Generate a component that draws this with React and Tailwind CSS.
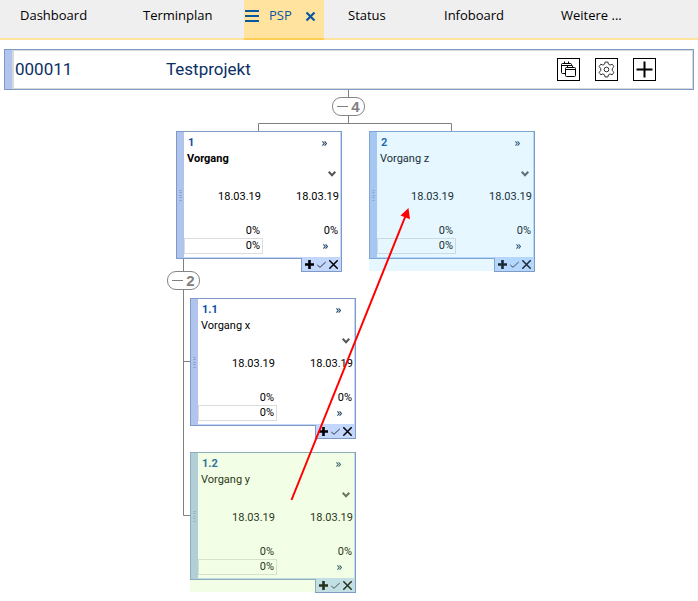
import React from "react";

const tabs = [
  { label: "Dashboard", cls: "w-[123px] pl-5" },
  { label: "Terminplan", cls: "w-[121px] pl-5" },
  { label: "PSP", active: true },
  { label: "Status", cls: "w-[100px] pl-6" },
  { label: "Infoboard", cls: "w-[117px] pl-5" },
  { label: "Weitere ...", cls: "pl-5" },
];

const nodes = [
  { id: "1", title: "Vorgang", bold: true, pos: "left-[176px] top-[41px]" },
  { id: "2", title: "Vorgang z", pos: "left-[369px] top-[41px]", tint: "bg-[rgba(130,215,255,0.2)]" },
  { id: "1.1", title: "Vorgang x", pos: "left-[190px] top-[208px]" },
  { id: "1.2", title: "Vorgang y", pos: "left-[190px] top-[362px]", tint: "bg-[rgba(190,255,130,0.2)]" },
];

function TabBar() {
  return (
    <nav className="flex h-10 bg-[#efefef] font-['Open_Sans','Noto_Sans',sans-serif] text-[13px] leading-4 text-black">
      {tabs.map((t) =>
        t.active ? (
          <div key={t.label} className="flex h-10 w-20 shrink-0 items-start border-b-2 border-[#ffcf55] bg-[#ffe39f] pt-[7px] text-[#0a56a0]">
            <button type="button" aria-label="Menü" className="ml-px h-4 w-[14px]">
              <svg width="14" height="18" viewBox="0 0 14 18" fill="none" stroke="currentColor" strokeWidth="2">
                <path d="M0 4h14M0 9h14M0 14h14" />
              </svg>
            </button>
            <a href="#psp" className="ml-[10px] w-[26px]">{t.label}</a>
            <button type="button" aria-label="PSP schließen" className="ml-[10px] h-4 w-[11px]">
              <svg width="11" height="18" viewBox="0 0 11 18" fill="none" stroke="currentColor" strokeWidth="2.200">
                <path d="M1.500 5.500l8 8M9.500 5.500l-8 8" />
              </svg>
            </button>
          </div>
        ) : (
          <a key={t.label} href={"#" + t.label} className={"shrink-0 border-b-2 border-[#ffe39f] pt-[7px] whitespace-nowrap last:grow " + t.cls}>
            {t.label}
          </a>
        )
      )}
    </nav>
  );
}

function HeaderButton({ label, children }) {
  return (
    <button type="button" aria-label={label} className="flex h-[23px] w-[23px] items-center justify-center border border-black bg-white text-black">
      {children}
    </button>
  );
}

function ProjectHeader() {
  return (
    <header className="mx-1 mt-[9px] flex h-[41px] border border-[#7f9ac6] bg-[#b0c4ee] pl-[7px] font-[Roboto,sans-serif]">
      <div className="flex grow items-center border border-l-2 border-[#d9d9d9] bg-white pr-9 text-[17px] leading-5 text-[#0b2f66]">
        <span className="w-[152px] pb-[2px] pl-px">000011</span>
        <h1 className="grow pb-[2px]">Testprojekt</h1>
        <div className="flex gap-[15px]">
          <HeaderButton label="Kopieren">
            <svg width="15" height="17" viewBox="0 0 15 17" fill="none" stroke="currentColor" strokeWidth="1">
              <path d="M4 12.500H1.500q-1 0-1-1v-8q0-1 1-1h8q1 0 1 1V5M0.500 4.500h10M3.500 0.500V3M7.500 0.500V3" />
              <path d="M5.500 6.500h8q1 0 1 1v7q0 1-1 1h-8q-1 0-1-1v-7q0-1 1-1zM4.500 8.500h10M6.500 4.500v2.500M11.500 4.500v2.500" />
            </svg>
          </HeaderButton>
          <HeaderButton label="Einstellungen">
            <svg width="17" height="17" viewBox="0 0 24 24" fill="none" stroke="#222" strokeWidth="1.300" strokeLinejoin="round">
              <path d="M9.300 4.400L10 1.500h4l.7 2.900 2.300 1.400 3-1.300 2.500 3.500-2.300 2.300v3.400l2.300 2.300-2.500 3.500-3-1.300-2.300 1.400-.7 2.900h-4l-.7-2.900L7 18.200l-3 1.300L1.500 16l2.300-2.300v-3.400L1.500 8 4 4.500l3 1.300z" />
              <circle cx="12" cy="12" r="3.300" />
            </svg>
          </HeaderButton>
          <HeaderButton label="Hinzufügen">
            <svg width="17" height="17" viewBox="0 0 17 17" fill="none" stroke="currentColor" strokeWidth="2">
              <path d="M8.500 0.500v16M0.500 8.500h16" />
            </svg>
          </HeaderButton>
        </div>
      </div>
    </header>
  );
}

function More() {
  return (
    <button type="button" aria-label="Mehr" className="flex h-4 w-[5px] items-center text-[#24486c]">
      <svg width="5" height="5" viewBox="0 0 5 5" fill="none" stroke="currentColor" strokeWidth="1.100">
        <path d="M0.400 0.400L2.200 2.500 0.400 4.600M2.600 0.400L4.400 2.500 2.600 4.600" />
      </svg>
    </button>
  );
}

function Grip() {
  return (
    <svg width="3" height="11" viewBox="0 0 3 11" fill="#8799c2">
      {[0, 2, 5, 7, 10].map((y) => (
        <path key={y} d={`M0.500 ${y}h2v1h-2z`} />
      ))}
    </svg>
  );
}

function NodeCard({ node }) {
  return (
    <article className={"absolute w-[166px] font-[Roboto,sans-serif] text-[11px] leading-4 text-black " + node.pos}>
      <div className="flex h-32 border border-[#7f9ac6] bg-white">
        <div className="flex w-[7px] shrink-0 items-center justify-center bg-[#b0c4ee]">
          <Grip />
        </div>
        <div className="grow border-r border-b border-[#c3d7fd] pt-[3px]">
          <div className="flex justify-between pr-[13px] pl-1">
            <span className="font-bold text-[#0b50a0]">{node.id}</span>
            <More />
          </div>
          <h2 className={"pl-[3px] " + (node.bold ? "font-bold" : "")}>{node.title}</h2>
          <div className="flex h-4 justify-end pr-1">
            <button type="button" aria-label="Aufklappen" className="h-[14px]">
              <svg width="8" height="6" viewBox="0 0 8 6" fill="none" stroke="#555" strokeWidth="2">
                <path d="M0.700 0.800L4 4.200 7.300 0.800" />
              </svg>
            </button>
          </div>
          <div className="mt-[6px] flex pr-px text-right">
            <time className="w-[77px]">18.03.19</time>
            <time className="grow">18.03.19</time>
          </div>
          <div className="mt-[18px] flex pr-[2px] text-right">
            <span className="w-[76px]">0%</span>
            <span className="grow">0%</span>
          </div>
          <div className="-mt-px flex justify-between pr-3">
            <input aria-label={"Fortschritt " + node.title} defaultValue="0%" className="h-4 w-[79px] border border-[#dcdcdc] bg-transparent pr-[2px] pb-px text-right leading-[13px] outline-none" />
            <More />
          </div>
        </div>
      </div>
      <div className="-mt-px flex justify-end">
        <div className="flex h-[14px] w-[41px] items-center justify-between border border-t-0 border-[#7f9ac6] bg-[#c3d7fd] px-[3px]">
          <button type="button" aria-label="Hinzufügen">
            <svg width="9" height="9" viewBox="0 0 9 9" fill="none" stroke="black" strokeWidth="2.600">
              <path d="M4.500 0v9M0 4.500h9" />
            </svg>
          </button>
          <button type="button" aria-label="Erledigt">
            <svg width="9" height="9" viewBox="0 0 9 9" fill="none" stroke="#334" strokeWidth="1">
              <path d="M0.300 5L3 7.300 8.700 2" />
            </svg>
          </button>
          <button type="button" aria-label="Löschen">
            <svg width="9" height="9" viewBox="0 0 9 9" fill="none" stroke="black" strokeWidth="1.500">
              <path d="M0.300 0.300l8.400 8.400M8.700 0.300l-8.400 8.400" />
            </svg>
          </button>
        </div>
      </div>
      {node.tint && <div className={"pointer-events-none absolute top-0 right-px bottom-px left-0 " + node.tint} />}
    </article>
  );
}

function CountBadge({ count, pos }) {
  return (
    <button type="button" aria-label={count + " Elemente einklappen"} className={"absolute flex h-[19px] w-[33px] items-center justify-center gap-[3px] rounded-[9px] border border-[#858585] bg-white font-['Liberation_Sans',sans-serif] text-[15px] leading-4 font-bold text-[#808080] " + pos}>
      <span className="h-px w-[11px] bg-[#808080]" />
      <span>{count}</span>
    </button>
  );
}

export default function App() {
  return (
    <div className="min-h-screen bg-white">
      <TabBar />
      <ProjectHeader />
      <main className="relative h-[511px]">
        <svg className="absolute top-0 left-0" width="698" height="511" viewBox="0 0 698 511" fill="none" stroke="#808080">
          <path d="M348.500 0v33.500M258.500 41v-7.500h193V41" />
          <path d="M183.500 169v256.500H190M183.500 271.500H190" />
        </svg>
        {nodes.map((n) => (
          <NodeCard key={n.id} node={n} />
        ))}
        <CountBadge count={4} pos="left-[332px] top-[7px]" />
        <CountBadge count={2} pos="left-[167px] top-[181px]" />
        <svg className="pointer-events-none absolute top-0 left-0" width="698" height="511" viewBox="0 0 698 511">
          <path d="M291.500 410L405.500 126" stroke="#ff0000" strokeWidth="2" />
          <path d="M408.500 118L400.500 125.500L410 129.300Z" fill="#ff0000" />
        </svg>
      </main>
    </div>
  );
}
